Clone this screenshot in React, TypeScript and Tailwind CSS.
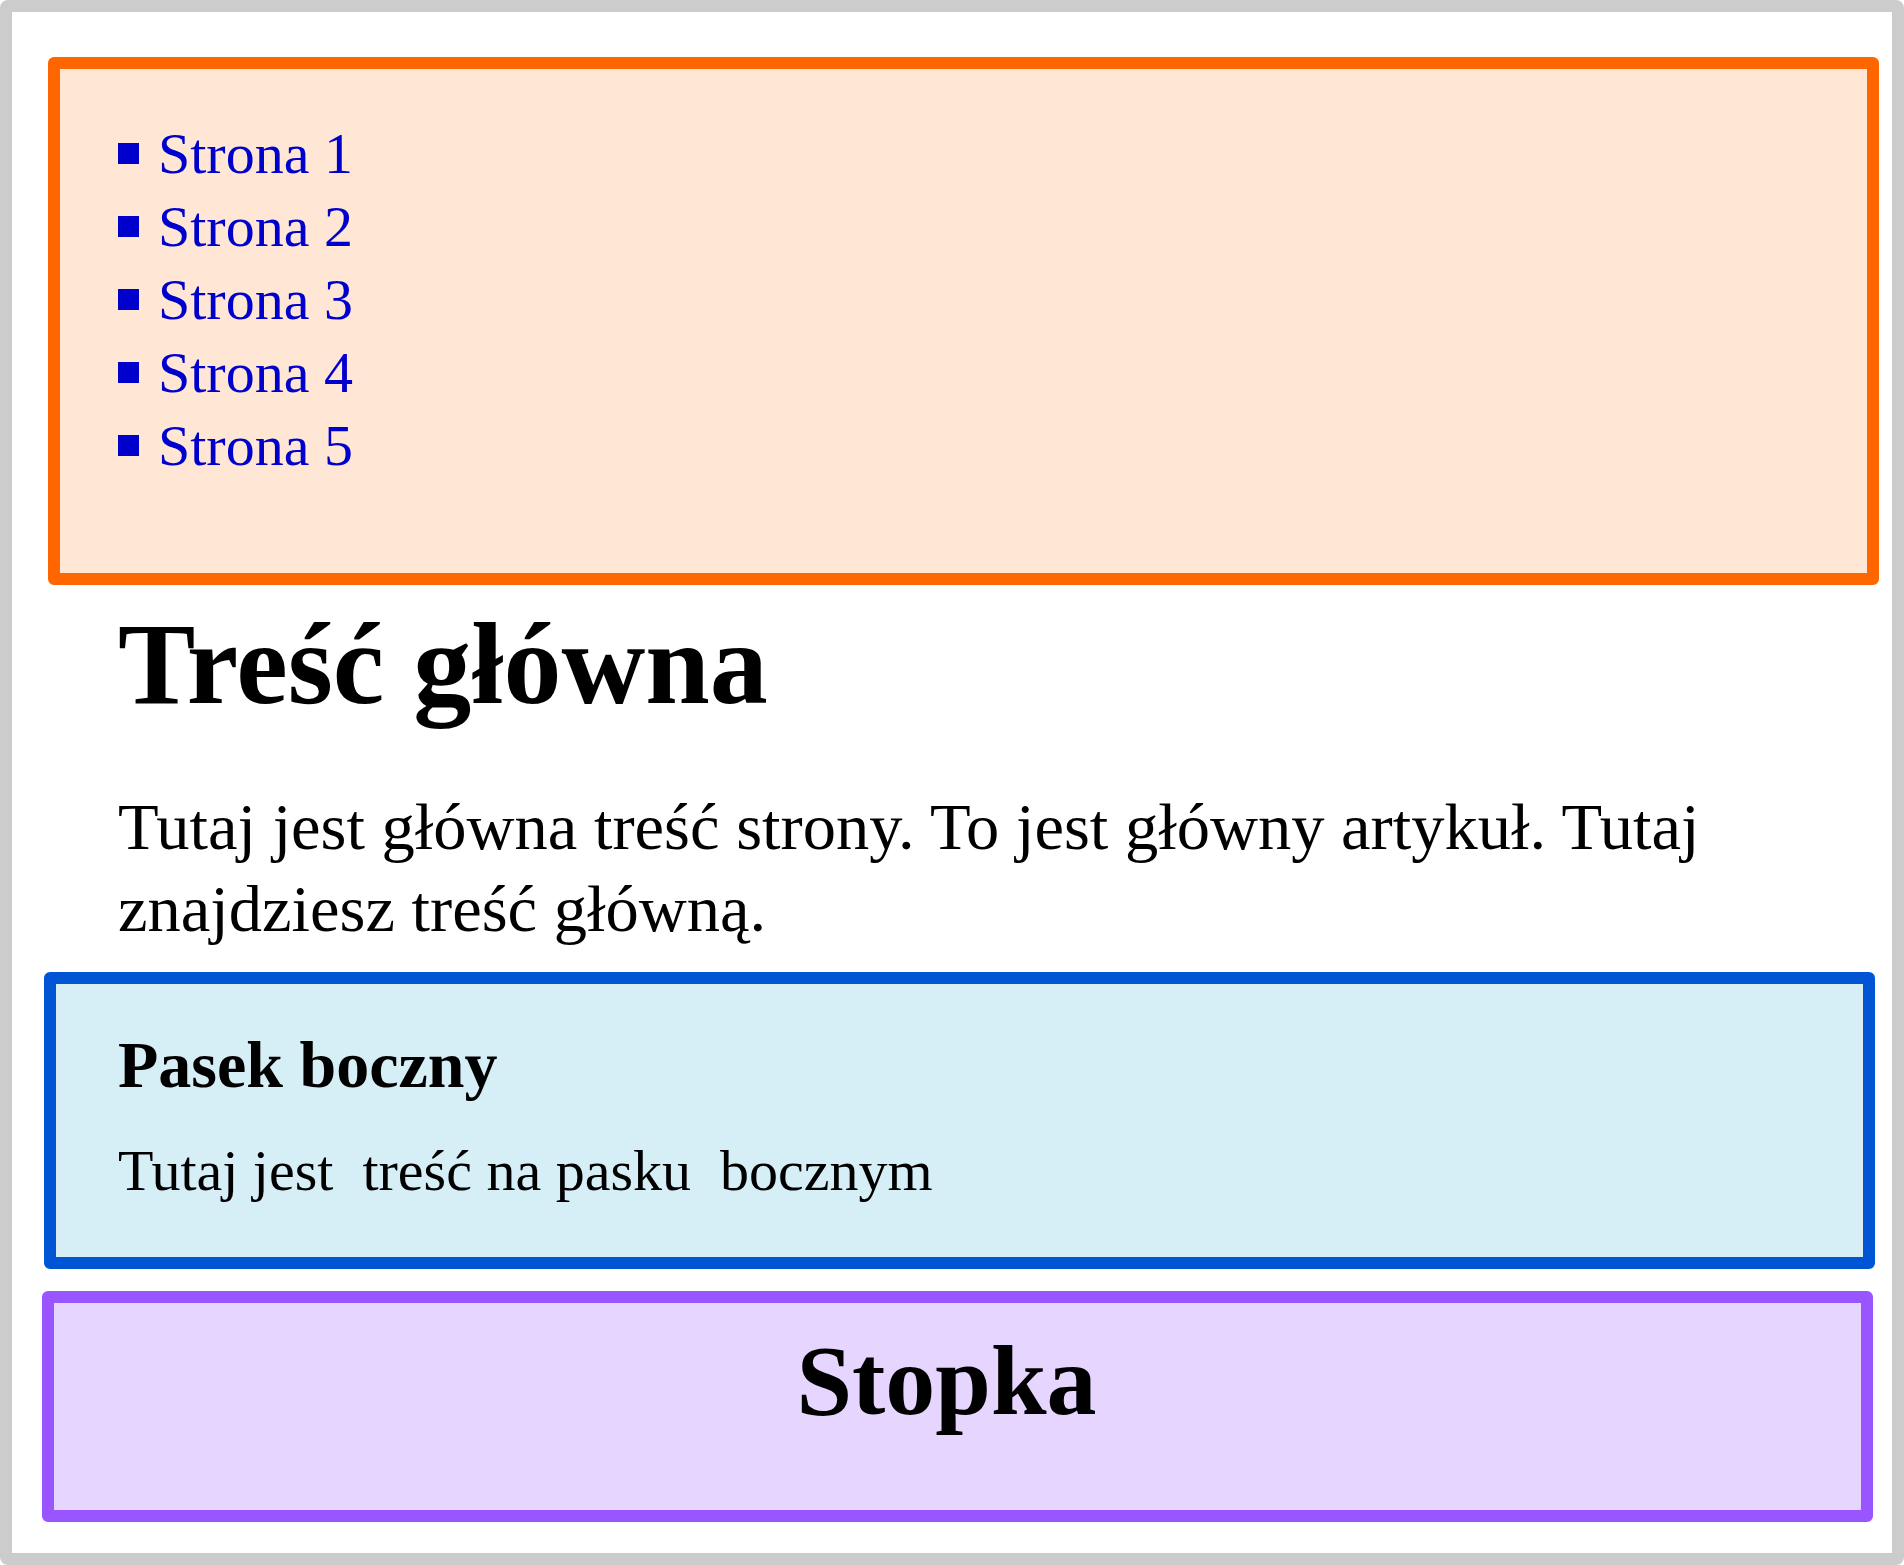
const pages = ['Strona 1', 'Strona 2', 'Strona 3', 'Strona 4', 'Strona 5']

export default function App() {
  return (
    <div
      className="h-[1565px] w-full rounded-[8px] border-[12px] border-[#cccccc] bg-white text-black"
      style={{ fontFamily: '"Liberation Serif", "Times New Roman", serif' }}
    >
      {/* nav */}
      <nav className="ml-[36px] mt-[45px] w-[1831px] rounded-[6px] border-[12px] border-[#ff6600] bg-[#ffe6d5] pl-[58px] pt-[48px] pb-[91px]">
        <ul>
          {pages.map(p => (
            <li key={p} className="flex items-baseline text-[58px] leading-[73px]">
              <span className="mr-[19px] inline-block h-[21px] w-[21px] translate-y-[-9px] bg-[#0000cc]" />
              <a href="#" className="text-[#0000cc]">{p}</a>
            </li>
          ))}
        </ul>
      </nav>

      {/* main */}
      <main className="pl-[106px] pr-[100px] pt-[21px]">
        <h1 className="text-[116px] font-bold leading-none">Treść główna</h1>
        <p className="mt-[64px] text-[66.5px] leading-[82px]">
          Tutaj jest główna treść strony. To jest główny artykuł. Tutaj znajdziesz treść główną.
        </p>
      </main>

      {/* aside */}
      <aside className="ml-[32px] mt-[22px] w-[1831px] rounded-[6px] border-[12px] border-[#0055d4] bg-[#d6eef5] pl-[62px] pt-[43px] pb-[53px]">
        <h2 className="text-[66px] font-bold leading-[76px]">Pasek boczny</h2>
        <p className="mt-[34px] text-[58px] leading-[67px]">
          Tutaj jest&nbsp; treść na pasku&nbsp; bocznym
        </p>
      </aside>

      {/* footer */}
      <footer className="ml-[30px] mt-[22px] w-[1831px] rounded-[6px] border-[12px] border-[#9955ff] bg-[#e5d5ff] pt-[28px] pb-[79px] pr-[22px] text-center">
        <h2 className="text-[100px] font-bold leading-none">Stopka</h2>
      </footer>
    </div>
  )
}
